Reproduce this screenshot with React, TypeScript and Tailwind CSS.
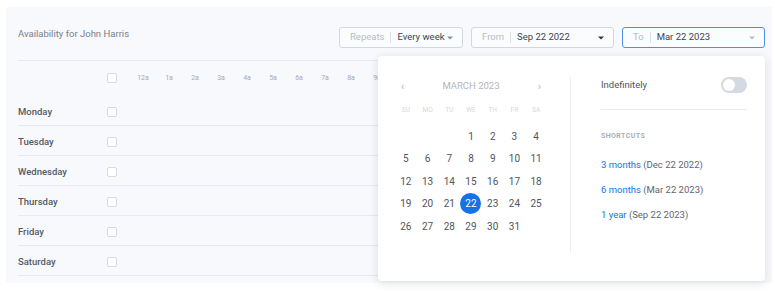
import React from "react";

const hours = ["12a", "1a", "2a", "3a", "4a", "5a", "6a", "7a", "8a", "9a", "10a", "11a", "12p", "1p", "2p", "3p", "4p", "5p", "6p", "7p", "8p", "9p"];
const days = ["Monday", "Tuesday", "Wednesday", "Thursday", "Friday", "Saturday"];
const weekdays = ["SU", "MO", "TU", "WE", "TH", "FR", "SA"];

// March 2023 starts on a Wednesday
const cells: (number | null)[] = [null, null, null, ...Array.from({ length: 31 }, (_, i) => i + 1)];

const shortcuts = [
  { label: "3 months", date: "(Dec 22 2022)" },
  { label: "6 months", date: "(Mar 22 2023)" },
  { label: "1 year", date: "(Sep 22 2023)" },
];

function Caret({ className }: { className: string }) {
  return (
    <svg width="6" height="4" viewBox="0 0 6 4" className={className}>
      <path d="M0 0.5h6L3 3.5z" fill="currentColor" />
    </svg>
  );
}

function Box() {
  return <span className="h-[10px] w-[10px] rounded-[2px] border border-[#d5d9e0] bg-white" />;
}

function Field({
  label,
  value,
  width,
  active,
  caretClass,
}: {
  label: string;
  value: string;
  width: string;
  active?: boolean;
  caretClass: string;
}) {
  return (
    <div
      className={`flex h-[21px] items-center rounded-[3px] border bg-[#fbfcfe] pl-[10px] pr-[9px] text-[9.5px] ${width} ${
        active ? "border-[#4d8fe8]" : "border-[#d3d7de]"
      }`}
    >
      <span className="text-[#b7bcc4]">{label}</span>
      <span className="mx-[6px] h-[11px] w-px bg-[#dcdfe4]" />
      <span className="text-[#3d4350]">{value}</span>
      <Caret className={`ml-auto ${caretClass}`} />
    </div>
  );
}

export default function App() {
  return (
    <div className="h-[294px] overflow-hidden bg-white font-['Roboto',sans-serif]">
      <div className="relative ml-[6px] mr-[3px] mt-[7px] h-[276px] bg-[#f8f9fd] pl-[12px] pr-[12px]">
        <div className="flex h-[54px] items-start border-b border-[#e6e9ef]">
          <div className="mt-[20px] text-[9.5px] text-[#7a808a]">Availability for John Harris</div>
          <div className="ml-auto mr-[-5px] mt-[20px] flex gap-[8px]">
            <Field label="Repeats" value="Every week" width="w-[124px]" caretClass="text-[#8a9099]" />
            <Field label="From" value="Sep 22 2022" width="w-[143px]" caretClass="text-[#2f3440]" />
            <Field label="To" value="Mar 22 2023" width="w-[143px]" active caretClass="text-[#b7bcc4]" />
          </div>
        </div>

        <div className="flex h-[35px] items-start pt-[12px]">
          <div className="w-[89px]" />
          <Box />
          <div className="ml-[13px] flex">
            {hours.map((h) => (
              <span key={h} className="w-[26px] text-center text-[7px] leading-[10px] text-[#a6a9b0]">
                {h}
              </span>
            ))}
          </div>
        </div>

        {days.map((d) => (
          <div key={d} className="flex h-[30px] items-center border-b border-[#e6e9ef] pt-[3px]">
            <span className="w-[89px] text-[9.5px] font-medium text-[#545a64]">{d}</span>
            <Box />
          </div>
        ))}

        <div className="absolute left-[372px] top-[49px] flex h-[225px] w-[387px] rounded-[4px] bg-white shadow-[0_2px_10px_rgba(30,40,60,0.14)]">
          <div className="w-[192px] pl-[17px] pt-[23px]">
            <div className="flex h-[14px] w-[152px] items-center justify-between px-[6px] text-[#b0b5bd]">
              <span className="text-[11px] leading-none">‹</span>
              <span className="text-[9.5px]">MARCH 2023</span>
              <span className="text-[11px] leading-none">›</span>
            </div>
            <div className="mt-[12px] grid w-[152px] grid-cols-7">
              {weekdays.map((w) => (
                <span key={w} className="text-center text-[6.5px] leading-[10px] text-[#d4d7dc]">
                  {w}
                </span>
              ))}
            </div>
            <div className="mt-[10px] grid w-[152px] grid-cols-7">
              {cells.map((c, i) => (
                <div key={i} className="flex h-[22.5px] items-center justify-center">
                  {c === 22 ? (
                    <span className="flex h-[21px] w-[21px] items-center justify-center rounded-full bg-[#1473e6] text-[10px] text-white">
                      22
                    </span>
                  ) : (
                    <span className="text-[10px] text-[#4f5560]">{c ?? ""}</span>
                  )}
                </div>
              ))}
            </div>
          </div>
          <div className="mt-[21px] h-[175px] w-px bg-[#eceef2]" />
          <div className="flex-1 pl-[30px] pr-[18px] pt-[21px]">
            <div className="flex h-[16px] items-center justify-between">
              <span className="text-[9.5px] text-[#4f5560]">Indefinitely</span>
              <span className="flex h-[16px] w-[26px] items-center rounded-full bg-[#d5dae2] pl-[2px]">
                <span className="h-[12px] w-[12px] rounded-full bg-white" />
              </span>
            </div>
            <div className="mt-[16px] h-px bg-[#e8eaee]" />
            <div className="mt-[21px] text-[7px] font-bold tracking-[0.06em] text-[#a9aeb6]">SHORTCUTS</div>
            <div className="mt-[17px] flex flex-col gap-[13px]">
              {shortcuts.map((s) => (
                <div key={s.label} className="text-[9.5px] leading-[12px]">
                  <span className="text-[#1473e6]">{s.label}</span>{" "}
                  <span className="text-[#5f6570]">{s.date}</span>
                </div>
              ))}
            </div>
          </div>
        </div>
      </div>
    </div>
  );
}
